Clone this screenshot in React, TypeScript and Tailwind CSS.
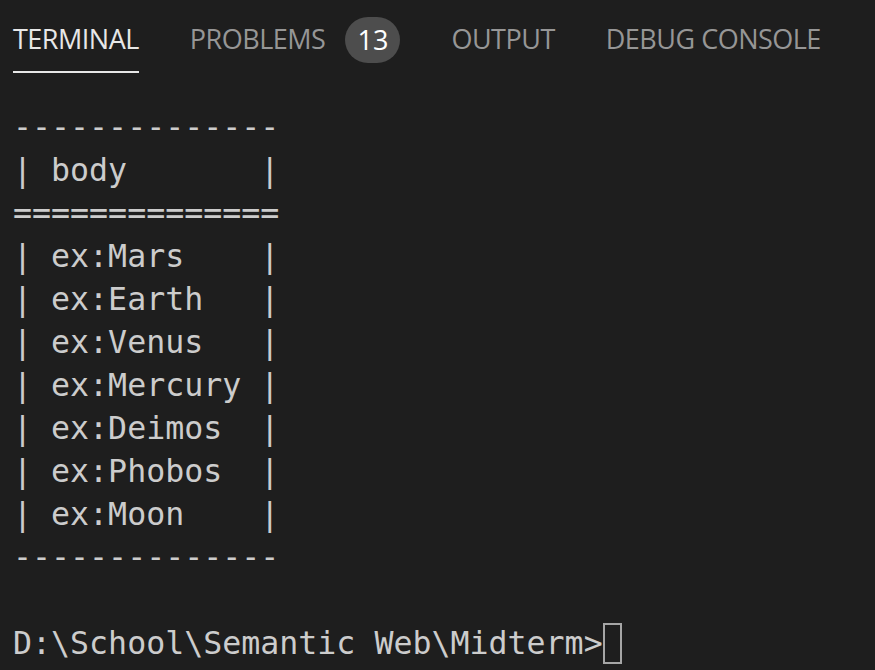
const tabs = [
  { label: "TERMINAL", active: true },
  { label: "PROBLEMS", badge: "13" },
  { label: "OUTPUT" },
  { label: "DEBUG CONSOLE" },
];

const lines = [
  "--------------",
  "| body       |",
  "==============",
  "| ex:Mars    |",
  "| ex:Earth   |",
  "| ex:Venus   |",
  "| ex:Mercury |",
  "| ex:Deimos  |",
  "| ex:Phobos  |",
  "| ex:Moon    |",
  "--------------",
  "",
];

export default function App() {
  return (
    <div className="w-[875px] h-[670px] bg-[#1e1e1e] overflow-hidden">
      {/* panel tabs */}
      <div className="flex items-start gap-[51px] pl-[13px] h-[74px] font-['Open_Sans',sans-serif]">
        {tabs.map((t) => (
          <div key={t.label} className="flex items-start">
            <div
              className={`h-[73px] pt-[16px] text-[27px] leading-[46px] tracking-[-0.5px] ${
                t.active ? "text-[#e7e7e7] border-b-2 border-[#e7e7e7]" : "text-[#969696]"
              }`}
            >
              {t.label}
            </div>
            {t.badge && (
              <div className="ml-[20px] mt-[17px] w-[55px] h-[46px] rounded-full bg-[#4d4d4d] text-white text-[27px] leading-[46px] text-center">
                {t.badge}
              </div>
            )}
          </div>
        ))}
      </div>

      {/* terminal output */}
      <pre className="pl-[13px] pt-[32px] text-[31.6px] leading-[43px] text-[#cccccc] font-['DejaVu_Sans_Mono',monospace]">
        {lines.join("\n")}
        {"\n"}
        <span>D:\School\Semantic Web\Midterm&gt;</span>
        <span className="inline-block align-top mt-[1px] w-[19px] h-[41px] border-2 border-[#a6a6a6]"></span>
      </pre>
    </div>
  );
}
